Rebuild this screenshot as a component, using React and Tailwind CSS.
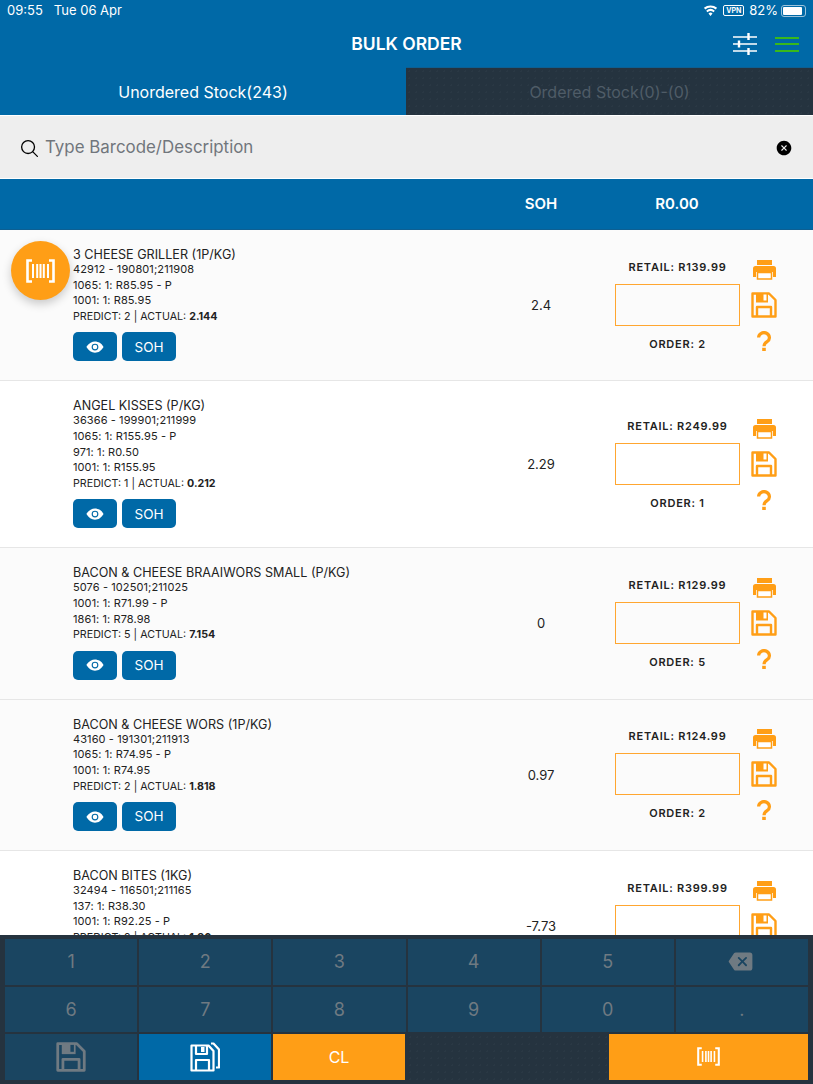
import { IoEye, IoSearchOutline, IoCloseCircle, IoBackspace } from "react-icons/io5";

const rows = [
  {
    name: "3 CHEESE GRILLER (1P/KG)",
    lines: ["42912 - 190801;211908", "1065: 1: R85.95 - P", "1001: 1: R85.95"],
    predict: 2,
    actual: "2.144",
    soh: "2.4",
    retail: "R139.99",
    bg: "bg-[#fbfbfb]",
  },
  {
    name: "ANGEL KISSES (P/KG)",
    lines: ["36366 - 199901;211999", "1065: 1: R155.95 - P", "971: 1: R0.50", "1001: 1: R155.95"],
    predict: 1,
    actual: "0.212",
    soh: "2.29",
    retail: "R249.99",
    bg: "bg-white",
  },
  {
    name: "BACON & CHEESE BRAAIWORS SMALL (P/KG)",
    lines: ["5076 - 102501;211025", "1001: 1: R71.99 - P", "1861: 1: R78.98"],
    predict: 5,
    actual: "7.154",
    soh: "0",
    retail: "R129.99",
    bg: "bg-[#fbfbfb]",
  },
  {
    name: "BACON & CHEESE WORS (1P/KG)",
    lines: ["43160 - 191301;211913", "1065: 1: R74.95 - P", "1001: 1: R74.95"],
    predict: 2,
    actual: "1.818",
    soh: "0.97",
    retail: "R124.99",
    bg: "bg-[#fbfbfb]",
  },
  {
    name: "BACON BITES (1KG)",
    lines: ["32494 - 116501;211165", "137: 1: R38.30", "1001: 1: R92.25 - P"],
    predict: 2,
    actual: "1.96",
    soh: "-7.73",
    retail: "R399.99",
    bg: "bg-white",
  },
];

const Barcode = ({ className }) => (
  <svg viewBox="0 0 29 24" className={className} fill="none" stroke="currentColor">
    <path d="M6 1.500H1.500v21H6M23 1.500h4.500v21H23" strokeWidth="2.600" />
    <path d="M7 5v14M11.200 5v14M14.500 5v14M17.800 5v14M22 5v14" strokeWidth="2" />
  </svg>
);

const Sliders = () => (
  <svg viewBox="0 0 24 24" className="w-[24px] h-[24px] text-white" fill="none" stroke="currentColor" strokeWidth="1.600">
    <path d="M0 5h24M0 12h24M0 19h24" />
    <path d="M15.500 1v7M6 8.500v7M15.500 16v7" strokeWidth="2.400" />
  </svg>
);

const Printer = () => (
  <svg viewBox="0 0 23 20" className="w-[23px] h-[20px] text-[#ff9e16]" fill="currentColor">
    <path d="M4 0h15v5H4z" />
    <path d="M2.500 6h18A2.500 2.500 0 0 1 23 8.500V17h-3v-5H3v5H0V8.500A2.500 2.500 0 0 1 2.500 6z" />
    <path d="M4.500 12.500h14V19h-14z" fill="white" stroke="currentColor" strokeWidth="1.500" />
  </svg>
);

const Save = ({ className, slot }) => (
  <svg viewBox="0 0 26 26" className={className} fill="none" stroke="currentColor" strokeWidth="2.400" strokeLinejoin="round">
    <path d="M1.500 1.500h16.500l6.500 6.500v16.500h-23z" />
    <path d="M6 24v-9h14v9" />
    <path d="M5 1h12v9.500H5z" fill="currentColor" stroke="none" />
    <path d="M12.500 2.500h3v6h-3z" fill={slot} stroke="none" />
  </svg>
);

const SaveAll = () => (
  <svg viewBox="0 0 30 30" className="w-[30px] h-[30px] text-white" fill="none" stroke="currentColor" strokeWidth="2.200" strokeLinejoin="round">
    <path d="M21 1.500h2.500l5.500 6v18h-3" />
    <path d="M1.500 3.500h17l5 5.500v19.500h-22z" fill="#0069a7" />
    <path d="M6 28v-10h13v10" />
    <path d="M6 4v8h11V4" />
    <path d="M11 5h3.500v5H11z" fill="currentColor" stroke="none" />
  </svg>
);

const Question = () => (
  <svg viewBox="0 0 14 20" className="w-[14px] h-[20px] text-[#ff9e16]" fill="none" stroke="currentColor" strokeWidth="3.200">
    <path d="M1.600 6.500a5.400 5 0 1 1 8.500 4.200c-2 1.300-3.100 2.200-3.100 4.500" />
    <path d="M5.200 16.800h3.600v3.200H5.200z" fill="currentColor" stroke="none" />
  </svg>
);

const Row = ({ item }) => (
  <div className={`flex items-center shrink-0 border-b border-[#e6e6e6] ${item.bg}`}>
    <div className="w-[481px] pl-[73px] pt-[18px] pb-[19px] text-[#222]">
      <p className="text-[12.600px] leading-[14px]">{item.name}</p>
      {item.lines.map((l) => (
        <p key={l} className="text-[11px] tracking-[0.1px] leading-[15.600px]">{l}</p>
      ))}
      <p className="text-[10.700px] leading-[15.600px]">
        PREDICT: {item.predict} | ACTUAL: <b>{item.actual}</b>
      </p>
      <div className="flex gap-[5px] mt-[8px]">
        <button className="w-[44px] h-[29px] rounded-[5px] bg-[#0069a7] text-white flex items-center justify-center">
          <IoEye className="text-[18px]" />
        </button>
        <button className="w-[54px] h-[29px] rounded-[5px] bg-[#0069a7] text-white text-[13.500px] flex items-center justify-center">
          SOH
        </button>
      </div>
    </div>
    <div className="w-[120px] pt-[1px] text-center text-[13px] text-[#222]">{item.soh}</div>
    <div className="ml-[14px] w-[125px] flex flex-col items-center">
      <p className="text-[11px] leading-[16px] font-semibold tracking-[0.75px] text-[#222]">RETAIL: {item.retail}</p>
      <div className="w-[125px] h-[42px] mt-[9px] border border-[#ffa630] bg-transparent"></div>
      <p className="text-[11px] leading-[16px] mt-[10px] font-semibold tracking-[0.75px] text-[#222]">ORDER: {item.predict}</p>
    </div>
    <div className="ml-[10px] w-[28px] flex flex-col items-center">
      <Printer />
      <Save className="w-[26px] h-[26px] mt-[12px] text-[#ff9e16]" slot="white" />
      <div className="h-[13px]"></div>
      <Question />
    </div>
  </div>
);

const Key = ({ children }) => (
  <div className="h-[45.500px] bg-[#1a4561] text-[#6f7a82] text-[18px] flex items-center justify-center">{children}</div>
);

const dots = "bg-[#25333f] bg-[radial-gradient(#2a3844_1px,transparent_1px)] bg-[length:7px_7px]";

export default function App() {
  return (
    <div className="w-[813px] h-[1084px] overflow-hidden flex flex-col font-[Inter,sans-serif] bg-white">
      <div className="h-[67px] bg-[#0069a7] text-white shrink-0">
        <div className="h-[21px] flex items-center justify-between px-[7px] text-[13px]">
          <div className="flex gap-[11px]">
            <span>09:55</span>
            <span>Tue 06 Apr</span>
          </div>
          <div className="flex items-center gap-[5px]">
            <svg viewBox="0 0 16 12" className="w-[15px] h-[11px]" fill="white">
              <path d="M8 12l-2.200-2.800a3.500 3.500 0 0 1 4.400 0zM4.700 7.900L3.300 6.200a7.300 7.300 0 0 1 9.400 0l-1.400 1.700a5 5 0 0 0-6.600 0zM2.300 4.900L.8 3.100a11 11 0 0 1 14.400 0l-1.500 1.800a8.800 8.800 0 0 0-11.400 0z" />
            </svg>
            <span className="w-[21px] h-[11px] rounded-[2px] border border-white text-[7px] font-bold leading-[9px] text-center">VPN</span>
            <span className="text-[13px]">82%</span>
            <div className="flex items-center">
              <div className="w-[25px] h-[12px] rounded-[3px] border border-[#9cc3dc] p-[1px] -ml-[2px]">
                <div className="w-[19px] h-full rounded-[1px] bg-white"></div>
              </div>
            </div>
          </div>
        </div>
        <div className="relative h-[46px] flex items-center justify-center">
          <span className="text-[17.500px] leading-[20px] font-semibold">BULK ORDER</span>
          <div className="absolute right-[14px] top-[11px] flex items-center gap-[18px]">
            <Sliders />
            <div className="w-[24px] flex flex-col gap-[4.500px]">
              <div className="h-[2px] bg-[#39b81c]"></div>
              <div className="h-[2px] bg-[#39b81c]"></div>
              <div className="h-[2px] bg-[#39b81c]"></div>
            </div>
          </div>
        </div>
      </div>

      <div className="h-[48px] flex shrink-0 bg-[#0069a7]">
        <div className="w-[406px] pt-[1px] text-white text-[16px] flex items-center justify-center">Unordered Stock(243)</div>
        <div className={`flex-1 ${dots} pt-[1px] border-t border-[#0d5f92] text-[#4f5c67] text-[16px] flex items-center justify-center`}>Ordered Stock(0)-(0)</div>
      </div>

      <div className="h-[64px] bg-[#eeeeee] border-y border-white flex items-center pl-[19px] pr-[20px] pt-[2px] shrink-0">
        <IoSearchOutline className="text-[21px] text-black" />
        <span className="ml-[5px] text-[16.900px] text-[#71767c] flex-1">Type Barcode/Description</span>
        <IoCloseCircle className="text-[18px] text-black" />
      </div>

      <div className="h-[51px] bg-[#0069a7] border-b border-[#0d5f92] text-white text-[15px] font-semibold flex items-center shrink-0">
        <div className="w-[481px]"></div>
        <div className="w-[120px] text-center">SOH</div>
        <div className="w-[152px] text-center">R0.00</div>
      </div>

      <div className="relative flex-1 min-h-0 overflow-hidden">
        {rows.map((item) => (
          <Row key={item.name} item={item} />
        ))}
        <div className="absolute left-[11px] top-[11px] w-[59px] h-[59px] rounded-full bg-[#ff9e16] shadow-[0_4px_10px_rgba(0,0,0,0.2)] text-white flex items-center justify-center">
          <Barcode className="w-[29px] h-[24px]" />
        </div>
      </div>

      <div className="h-[149px] bg-[#25333f] px-[5px] pt-[4px] shrink-0">
        <div className="grid grid-cols-6 gap-[2px]">
          {["1", "2", "3", "4", "5"].map((k) => (
            <Key key={k}>{k}</Key>
          ))}
          <Key>
            <IoBackspace className="text-[29px]" />
          </Key>
          {["6", "7", "8", "9", "0", "."].map((k) => (
            <Key key={k}>{k}</Key>
          ))}
        </div>
        <div className="flex gap-[2px] mt-[2px] h-[45.500px]">
          <div className="w-[132px] bg-[#1a4561] text-[#6f7a82] flex items-center justify-center">
            <Save className="w-[30px] h-[30px]" slot="#1a4561" />
          </div>
          <div className="w-[132px] bg-[#0069a7] flex items-center justify-center">
            <SaveAll />
          </div>
          <div className="w-[132px] bg-[#ff9e16] text-white text-[16px] flex items-center justify-center">CL</div>
          <div className={`w-[200px] ${dots}`}></div>
          <div className="flex-1 bg-[#ff9e16] text-white flex items-center justify-center">
            <Barcode className="w-[23px] h-[19px]" />
          </div>
        </div>
      </div>
    </div>
  );
}
